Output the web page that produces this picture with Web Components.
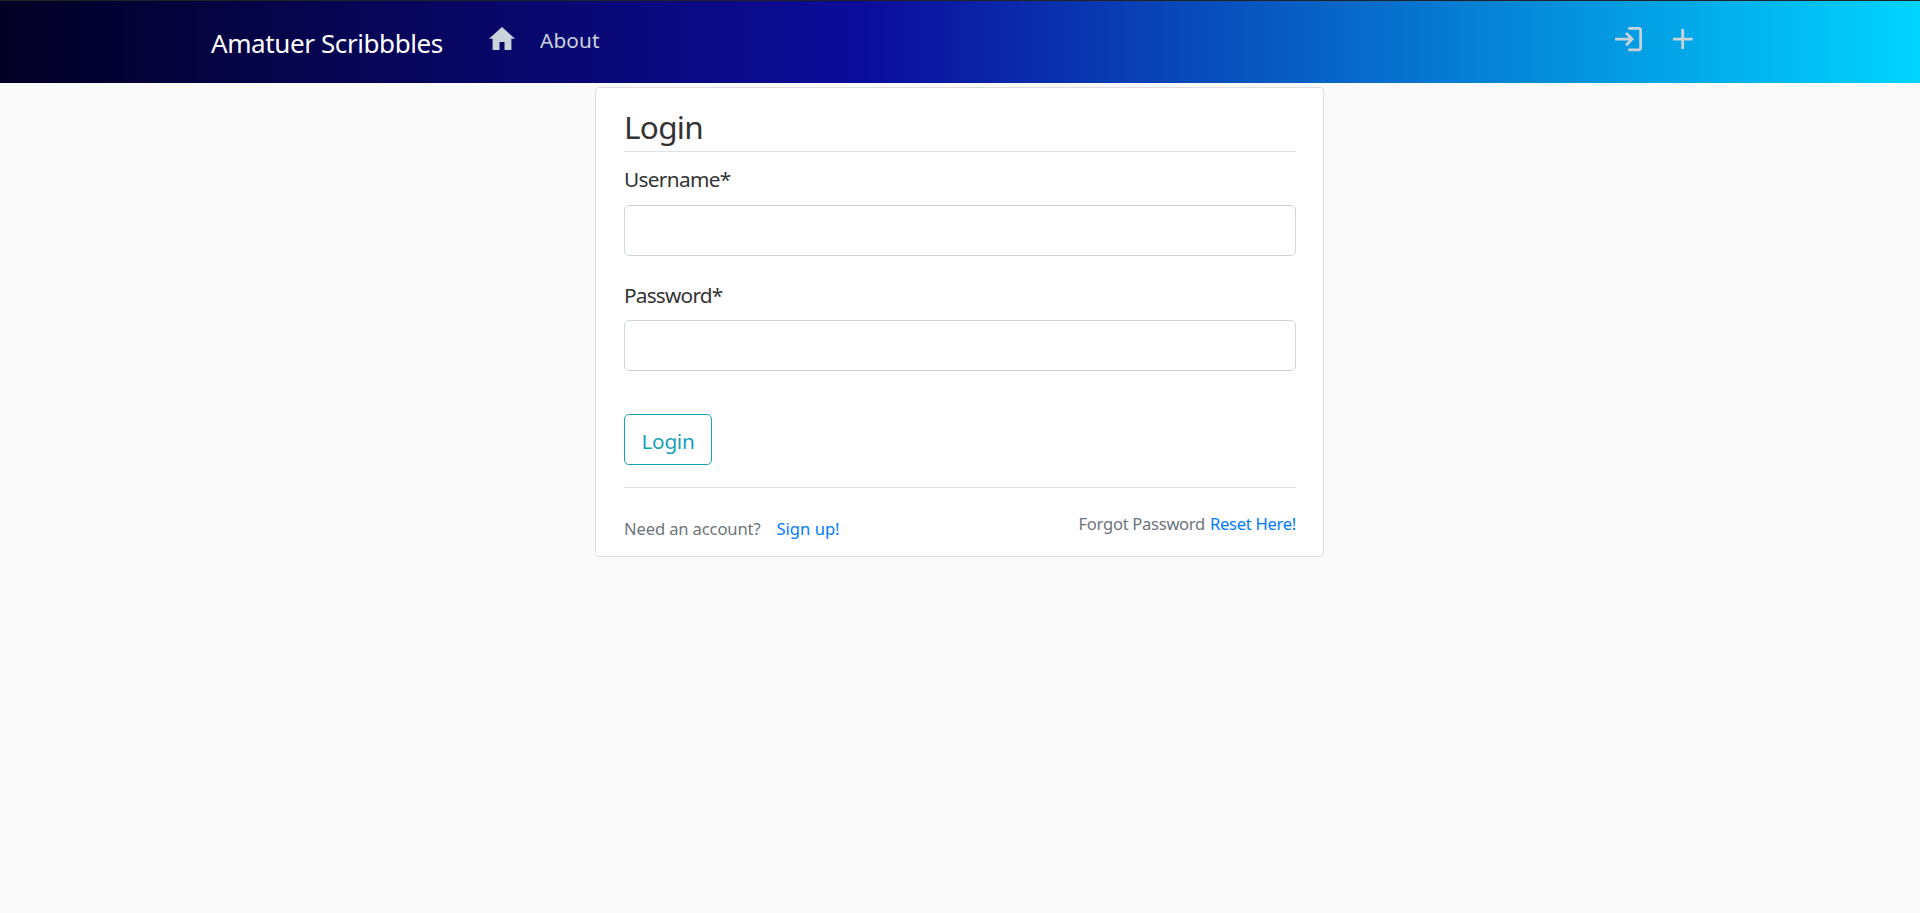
<!DOCTYPE html>
<html lang="en">
<head>
<meta charset="utf-8">
<title>Login</title>
<style>
body{margin:0;background:#fafafa;color:#333;font-family:"Noto Sans","Open Sans",sans-serif;font-size:20.8px;line-height:32px}
</style>
</head>
<body>
<site-header></site-header>
<login-card></login-card>
<script>
function define(name, html){
  const t=document.createElement('template');
  t.innerHTML=html;
  customElements.define(name, class extends HTMLElement{
    constructor(){super();this.attachShadow({mode:'open'}).append(t.content.cloneNode(true));}
  });
}
define('nav-icon', `<style>:host{display:block;color:#cbd3da}</style><slot></slot>`);
define('site-header', `<style>
:host{display:flex;box-sizing:border-box;height:83px;border-top:1px solid #222;padding:0 227px 0 211px;background:linear-gradient(90deg,#020024 0%,#0c0c9b 45%,#00d4ff 100%)}
.brand{margin-top:22px;width:278px;color:#fff;font-size:26px;line-height:40px;letter-spacing:-.4px;white-space:nowrap}
.about{margin:23px 0 0 25px;color:#cbd3da;letter-spacing:.1px}
nav-icon{margin-top:25px}
.right{display:flex;margin-left:auto;gap:31px}
svg{display:block}
</style>
<div class="brand">Amatuer Scribbbles</div>
<nav-icon><svg width="26" height="25" viewBox="0 0 26 25" fill="currentColor"><path d="M13 1 26 12.8h-3.6V24h-6.9v-8h-5v8H3.600V12.800H0z"/></svg></nav-icon>
<div class="about">About</div>
<div class="right">
<nav-icon><svg width="27" height="26" viewBox="0 0 27 26" fill="none" stroke="currentColor" stroke-width="2.7"><path d="M13.2 2.4H24q1.6 0 1.6 1.7v18q0 1.7-1.6 1.7H13.2M0 13.1h17M11 7l6.2 6.1-6.2 6.1"/></svg></nav-icon>
<nav-icon><svg width="20" height="24" viewBox="0 0 20 24" fill="none" stroke="currentColor" stroke-width="2.8"><path d="M0 13.1h19.6M9.7 3.1v20"/></svg></nav-icon>
</div>`);
define('form-field', `<style>
:host{display:block;letter-spacing:-.85px}
label{display:block;height:32px;white-space:nowrap}
input{display:block;box-sizing:border-box;width:100%;height:51px;margin:10px 0 0;border:1px solid #ced4da;border-radius:5px;background:#fff;padding:8px 16px;font:inherit;outline:0}
:host([compact]) input{margin-top:9px}
</style><label><slot></slot></label><input>`);
define('login-card', `<style>
:host{display:block;box-sizing:border-box;width:729px;height:470px;margin:4px 0 0 595px;border:1px solid #dcdddf;border-radius:4px;background:#fff;padding:19px 27px 0 28px}
h1{margin:0;font-size:31.5px;font-weight:400;line-height:40px;height:44px;border-bottom:1px solid #dee2e6;letter-spacing:-.7px}
form-field{margin-top:11px;letter-spacing:-.68px}
form-field+form-field{margin-top:23px;letter-spacing:-.78px}
button{display:block;box-sizing:border-box;width:88px;height:51px;margin:43px 0 22px;padding:3px 0 0;border:1px solid #17a2b8;border-radius:5px;background:none;color:#17a2b8;font:inherit;line-height:46px;letter-spacing:-.3px}
footer{display:flex;justify-content:space-between;border-top:1px solid #dee2e6;padding-top:23px;font-size:16.6px;line-height:26px;color:#6c757d;white-space:nowrap}
a{color:#007bff}
.join{display:flex;gap:16px;padding-top:5px}
.join span{letter-spacing:-.14px}
.reset{display:flex;gap:5px;letter-spacing:-.3px}
</style>
<h1>Login</h1>
<form-field>Username*</form-field>
<form-field compact>Password*</form-field>
<button type="button">Login</button>
<footer><div class="join"><span>Need an account?</span><a>Sign up!</a></div>
<div class="reset"><span>Forgot Password</span><a>Reset Here!</a></div></footer>`);
</script>
</body>
</html>
